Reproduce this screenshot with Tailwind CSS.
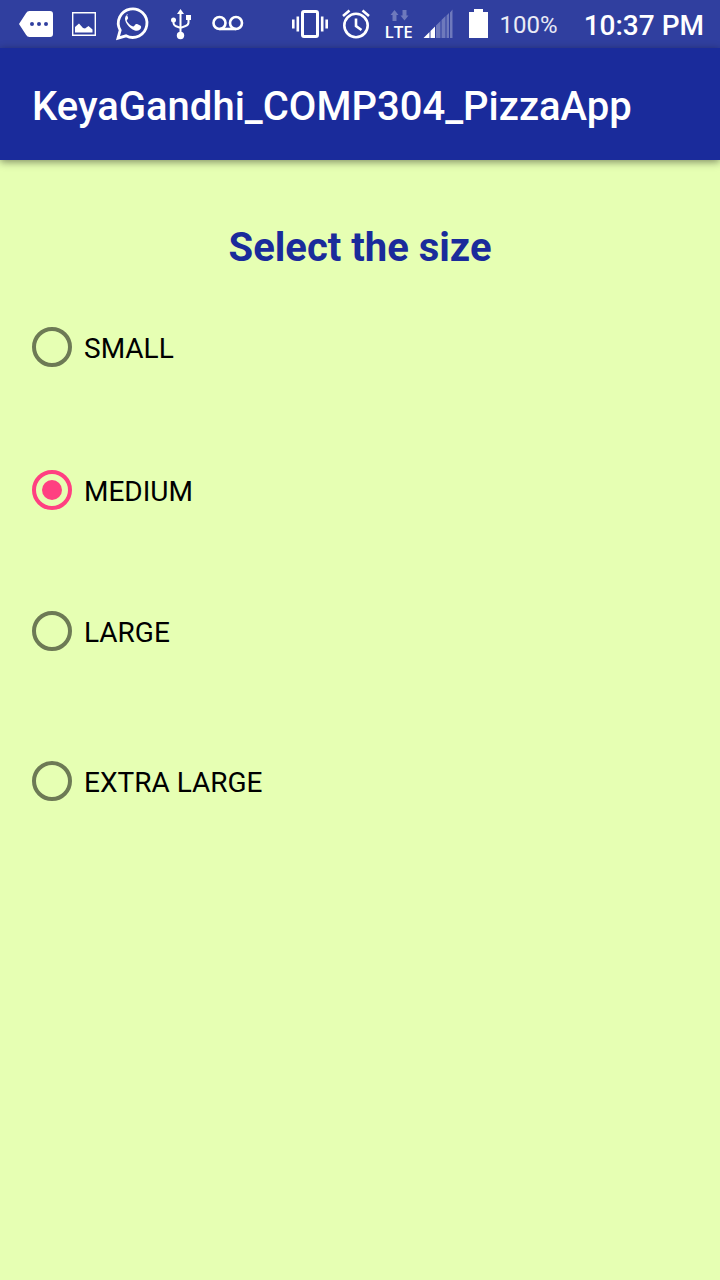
<!DOCTYPE html>
<html lang="en">
<head>
<meta charset="utf-8">
<meta name="viewport" content="width=device-width, initial-scale=1">
<title>KeyaGandhi_COMP304_PizzaApp</title>
<script src="https://cdn.jsdelivr.net/npm/@tailwindcss/browser@4"></script>
</head>
<body class="min-h-screen bg-[#e6ffb3] font-[Roboto,sans-serif] text-black">
<!-- Status bar -->
<div class="flex h-12 items-center bg-[#303f9f] pl-3 pr-4 text-white">
  <div class="flex">
    <svg class="size-12" viewBox="0 0 48 48" fill="currentColor" aria-hidden="true"><path fill-rule="evenodd" d="M7 24 14 13.200Q15.200 11 17.500 11H38Q41 11 41 14V34Q41 37 38 37H17.500Q15.200 37 14 34.800ZM20 22a2 2 0 1 0 0 4 2 2 0 0 0 0-4ZM27 22a2 2 0 1 0 0 4 2 2 0 0 0 0-4ZM34 22a2 2 0 1 0 0 4 2 2 0 0 0 0-4Z"/></svg>
    <svg class="size-12" viewBox="0 0 48 48" fill="currentColor" aria-hidden="true"><path d="M12.700 12.700H35.300V35.300H12.700Z" fill="none" stroke="currentColor" stroke-width="1.400"/><path d="M15 32.500V27L19 23.500 23 28 25 28.500 28.500 26 32.500 29.500V32.500Z"/></svg>
    <svg class="size-12" viewBox="-1 1 48 48" fill="none" stroke="currentColor" aria-hidden="true"><path stroke-width="2.800" d="M9 39.200 11.200 31.200A14.300 14.300 0 1 1 17 36.800Z"/><path fill="currentColor" stroke="none" d="M19.500 16.200c-1-.5-2.300 0-3 1.300-2.300 4 3.500 12 9.300 13.900 3 1 6.100-.6 6.300-3.200.1-1-.2-1.300-1-1.700l-3-1.400c-.8-.4-1.300-.2-1.800.5l-1.100 1.400c-.4.5-.9.600-1.600.3-2.400-1-4.400-2.800-5.700-5.100-.3-.6-.2-.9.200-1.400.9-1 1.200-1.500.9-2.300l-1.200-2.900c-.2-.6-.4-.9-.9-1Z"/></svg>
    <svg class="size-12" viewBox="0 0 48 48" fill="none" stroke="currentColor" stroke-width="2" aria-hidden="true"><path d="M24.500 13V35M17.500 20v3q0 2 2 3l5 2 5-2q3-1 3-3.500V17"/><path fill="currentColor" stroke="none" d="m24.500 9 3.500 5h-7ZM30 15h5v5h-5Z"/><circle cx="17.500" cy="20" r="2.500" fill="currentColor" stroke="none"/><circle cx="24.500" cy="35.500" r="3.700" fill="currentColor" stroke="none"/></svg>
    <svg class="size-12" viewBox="0 0 48 48" fill="none" stroke="currentColor" stroke-width="2.600" aria-hidden="true"><circle cx="15.500" cy="23" r="6"/><circle cx="32" cy="23" r="6"/><path d="M15.500 29H32"/></svg>
  </div>
  <div class="ml-auto flex items-center">
    <svg class="h-12 w-12" viewBox="0 0 48 48" fill="none" stroke="currentColor" aria-hidden="true"><rect x="16.500" y="11.500" width="15" height="25" rx="1.500" stroke-width="3"/><path stroke-width="2.600" d="M7.300 19.500V28.500M40.700 19.500V28.500M11.800 16.500V31.500M36.200 16.500V31.500"/></svg>
    <svg class="h-12 w-11" viewBox="0 0 44 48" fill="none" stroke="currentColor" stroke-width="2.600" aria-hidden="true"><circle cx="22" cy="25.500" r="11.700"/><path d="M22 18.500V26L27.500 30M9 16l6.500-5.500M28.500 10.500 35 16"/></svg>
    <div class="flex h-12 w-[42px] flex-col items-center pt-2">
      <svg class="h-4 w-5 shrink-0" viewBox="0 0 20 16" fill="#fff" fill-opacity=".3" aria-hidden="true"><path d="m5.500 2 4 5h-2v6h-4V7h-2ZM13.500 2h4v5.500h2l-4 5-4-5h2Z"/></svg>
      <span class="font-['Open_Sans',sans-serif] text-[17px] leading-4 font-semibold">LTE</span>
    </div>
    <svg class="h-12 w-10" viewBox="0 0 40 48" fill="currentColor" aria-hidden="true"><path d="M3.500 38 9.500 32V38ZM10.500 31 15 26.500V38H10.500Z"/><path fill-opacity=".3" d="M16 25.500 20.500 21V38H16ZM21.500 20 25.500 16V38H21.500ZM26.500 15.500 29 13V38H26.500ZM30 12.500 32.500 9.500V38H30Z"/></svg>
    <svg class="h-12 w-9" viewBox="0 0 36 48" fill="currentColor" aria-hidden="true"><path d="M9 12H14V9H23V12H28V38H9Z"/></svg>
    <span class="ml-1 pt-0.5 text-2xl text-white/90">100%</span>
    <span class="ml-[26px] pt-1 text-[28px] leading-9 font-medium">10:37 PM</span>
  </div>
</div>
<!-- App bar -->
<header class="flex h-28 items-center bg-[#1a2b9b] px-8 pt-1.5 text-white shadow-[0_2px_8px_rgba(0,0,0,0.45)]">
  <h1 class="text-[40px] font-medium">KeyaGandhi_COMP304_PizzaApp</h1>
</header>
<main class="px-8 pt-16">
  <form>
    <fieldset>
      <legend class="w-full text-center text-[40px] leading-12 font-bold text-[#1a2b9b]">Select the size</legend>
      <label class="mt-[55px] flex h-10 items-center gap-3 text-[28px]"><input type="radio" name="size" class="size-10 appearance-none rounded-full border-4 border-[#6d7a55] p-1.5 checked:border-[#ff4081] checked:bg-[#ff4081] checked:bg-clip-content"><span class="pt-1">SMALL</span></label>
      <label class="mt-[103px] flex h-10 items-center gap-3 text-[28px]"><input type="radio" name="size" checked class="size-10 appearance-none rounded-full border-4 border-[#6d7a55] p-1.5 checked:border-[#ff4081] checked:bg-[#ff4081] checked:bg-clip-content"><span class="pt-1">MEDIUM</span></label>
      <label class="mt-[101px] flex h-10 items-center gap-3 text-[28px]"><input type="radio" name="size" class="size-10 appearance-none rounded-full border-4 border-[#6d7a55] p-1.5 checked:border-[#ff4081] checked:bg-[#ff4081] checked:bg-clip-content"><span class="pt-1">LARGE</span></label>
      <label class="mt-[110px] flex h-10 items-center gap-3 text-[28px]"><input type="radio" name="size" class="size-10 appearance-none rounded-full border-4 border-[#6d7a55] p-1.5 checked:border-[#ff4081] checked:bg-[#ff4081] checked:bg-clip-content"><span class="pt-1">EXTRA LARGE</span></label>
    </fieldset>
  </form>
</main>
</body>
</html>
